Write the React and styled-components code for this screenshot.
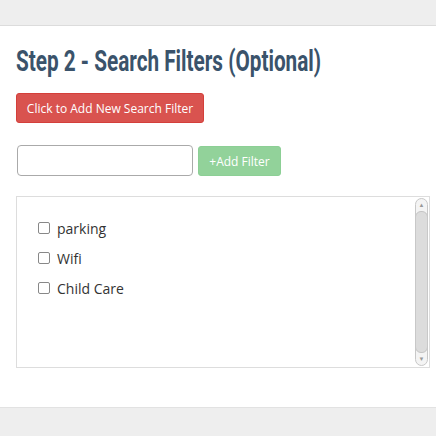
import styled, { createGlobalStyle } from 'styled-components';

const Global = createGlobalStyle`
    html, body {
        margin: 0;
        padding: 0;
        background: #eeeeee;
        font-family: "Open Sans", "Liberation Sans", sans-serif;
    }
`

const Page = styled.div`
    width: 436px;
    height: 436px;
    display: flex;
    flex-direction: column;
    background: #eeeeee;
`

const TopBand = styled.div`
    height: 25px;
    border-bottom: 1px solid #dcdcdc;
`

const Panel = styled.section`
    background: #ffffff;
    height: 382px;
    padding: 20px 7px 0 16px;
    box-sizing: border-box;
    border-bottom: 1px solid #e2e2e2;
`

const Title = styled.h2`
    margin: 0;
    height: 30px;
    font-family: Roboto, "Liberation Sans", sans-serif;
    font-weight: 700;
    font-size: 29px;
    line-height: 31px;
    color: #3a536b;
    white-space: nowrap;
`

const Squeeze = styled.span`
    display: inline-block;
    transform: scaleX(0.715);
    transform-origin: left center;
`

const AddNewButton = styled.button`
    margin-top: 17px;
    width: 188px;
    height: 30px;
    background: #d9534f;
    border: 1px solid #d43f3a;
    border-radius: 3px;
    color: #ffffff;
    font-family: "Open Sans", sans-serif;
    font-size: 12px;
    padding: 0;
`

const FilterRow = styled.div`
    display: flex;
    align-items: flex-end;
    gap: 5px;
    margin-top: 22px;
    padding-left: 1px;
`

const TextInput = styled.input`
    width: 176px;
    height: 31px;
    box-sizing: border-box;
    border: 1px solid #aaaaaa;
    border-radius: 4px;
    padding: 4px 8px;
    font-family: "Open Sans", sans-serif;
`

const AddFilterButton = styled.button`
    width: 83px;
    height: 30px;
    background: #92d29a;
    border: 1px solid #8ccf95;
    border-radius: 3px;
    color: #ffffff;
    font-family: "Open Sans", sans-serif;
    font-size: 12px;
    padding: 0;
`

const ListBox = styled.div`
    margin-top: 20px;
    width: 414px;
    height: 172px;
    box-sizing: border-box;
    border: 1px solid #dddddd;
    display: flex;
`

const List = styled.ul`
    flex: 1;
    list-style: none;
    margin: 0;
    padding: 16px 0 0 21px;
`

const Item = styled.li`
    display: flex;
    align-items: center;
    gap: 7px;
    height: 30px;
    font-size: 14px;
    color: #333333;
`

const Box = styled.span`
    width: 10px;
    height: 10px;
    border: 1px solid #888888;
    border-radius: 2px;
    background: #ffffff;
`

const Scrollbar = styled.div`
    width: 13px;
    margin: 1px 1px 1px 0;
    display: flex;
    flex-direction: column;
    border: 1px solid #c8c8c8;
    border-radius: 7px;
    box-sizing: border-box;
    background: #f4f4f4;
    overflow: hidden;
`

const Arrow = styled.div`
    height: 12px;
    display: flex;
    align-items: center;
    justify-content: center;
    font-size: 6px;
    color: #999999;
    line-height: 1;
`

const Thumb = styled.div`
    flex: 1;
    background: #dcdcdc;
    border: 1px solid #c4c4c4;
    border-radius: 6px;
    margin: 0 -1px;
`

const BottomBand = styled.div`
    flex: 1;
`

const filters = ['parking', 'Wifi', 'Child Care'];

export default function App() {
    return (
        <>
            <Global />
            <Page>
                <TopBand />
                <Panel>
                    <Title><Squeeze>Step 2 - Search Filters (Optional)</Squeeze></Title>
                    <AddNewButton>Click to Add New Search Filter</AddNewButton>
                    <FilterRow>
                        <TextInput type="text" />
                        <AddFilterButton>+Add Filter</AddFilterButton>
                    </FilterRow>
                    <ListBox>
                        <List>
                            {filters.map((f) => (
                                <Item key={f}>
                                    <Box />
                                    {f}
                                </Item>
                            ))}
                        </List>
                        <Scrollbar>
                            <Arrow>▲</Arrow>
                            <Thumb />
                            <Arrow>▼</Arrow>
                        </Scrollbar>
                    </ListBox>
                </Panel>
                <BottomBand />
            </Page>
        </>
    );
}
